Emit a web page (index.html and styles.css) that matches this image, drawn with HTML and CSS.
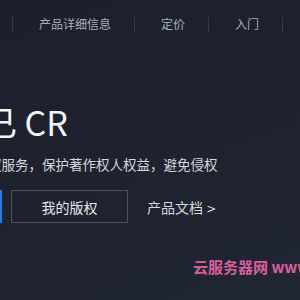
FILE: index.html
```html
<!DOCTYPE html>
<html lang="zh-CN">
<head>
<meta charset="utf-8">
<link rel="stylesheet" href="styles.css">
</head>
<body>
<div class="page">
  <nav class="nav">
    <span class="sep"></span>
    <a class="nav-item">产品详细信息</a>
    <span class="sep"></span>
    <a class="nav-item">定价</a>
    <span class="sep"></span>
    <a class="nav-item">入门</a>
    <span class="sep"></span>
  </nav>
  <section class="hero">
    <h1 class="title">已 CR</h1>
    <p class="desc">权服务，保护著作权人权益，避免侵权</p>
    <div class="actions">
      <span class="primary"></span>
      <a class="btn">我的版权</a>
      <a class="link">产品文档 <span class="arrow">&gt;</span></a>
    </div>
  </section>
  <div class="watermark">云服务器网 www</div>
</div>
</body>
</html>
```
FILE: styles.css
```css
html, body {
  margin: 0;
  padding: 0;
  width: 300px;
  height: 300px;
  overflow: hidden;
  background: #1e2230;
}
.page {
  width: 300px;
  height: 300px;
  overflow: hidden;
  background: linear-gradient(160deg, #1c202d 0%, #1f2330 60%, #212634 100%);
  font-family: "Noto Sans CJK SC", "Noto Sans", sans-serif;
  color: #e8eaee;
  display: flex;
  flex-direction: column;
}
.nav {
  display: flex;
  align-items: center;
  height: 48px;
  padding-left: 12px;
}
.sep {
  width: 1px;
  height: 15px;
  background: #343947;
}
.nav-item {
  padding: 0 23px 0 26px;
  font-size: 12px;
  line-height: 16px;
  color: #a8acb5;
  white-space: nowrap;
}
.hero {
  display: flex;
  flex-direction: column;
  margin-top: 54px;
}
.title {
  margin: 0 0 0 -17px;
  font-size: 34px;
  font-weight: 400;
  line-height: 40px;
  color: #f2f4f7;
  white-space: nowrap;
}
.desc {
  margin: 13px 0 0 -12px;
  font-size: 13.5px;
  line-height: 18px;
  color: #d3d6dc;
  white-space: nowrap;
}
.actions {
  display: flex;
  align-items: center;
  margin-top: 17px;
}
.primary {
  width: 2px;
  height: 33px;
  background: #1d7fe0;
}
.btn {
  box-sizing: border-box;
  width: 117px;
  height: 33px;
  margin-left: 9px;
  border: 1px solid #4d525e;
  display: flex;
  align-items: center;
  justify-content: center;
  font-size: 14px;
  color: #e6e8ec;
}
.link {
  margin-left: 19px;
  font-size: 14px;
  color: #d6d9de;
  white-space: nowrap;
}
.arrow {
  font-family: "DejaVu Sans", sans-serif;
  font-size: 12px;
}
.watermark {
  margin: 34px 0 0 193px;
  font-size: 15px;
  font-weight: 700;
  line-height: 20px;
  color: #d85f9c;
  white-space: nowrap;
}
```
